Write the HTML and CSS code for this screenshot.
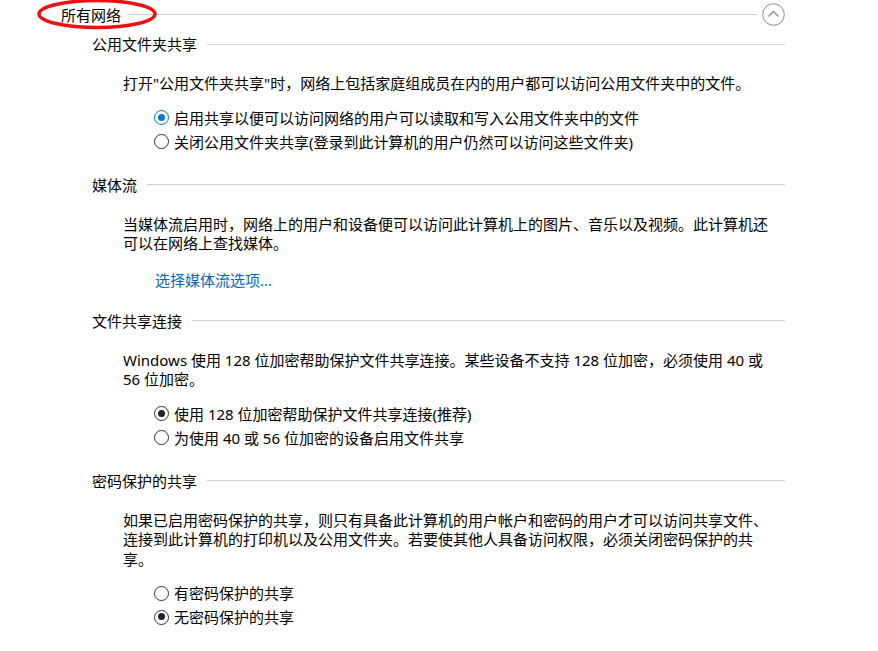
FILE: index.html
```html
<!DOCTYPE html>
<html lang="zh-CN">
<head>
<meta charset="utf-8">
<title>高级共享设置</title>
<link rel="stylesheet" href="styles.css">
</head>
<body>
<div class="page">
  <div class="group-head">
    <span class="group-title">所有网络</span>
    <span class="rule"></span>
    <button class="collapse" aria-label="折叠">
      <svg width="23" height="23" viewBox="0 0 23 23"><circle cx="11.5" cy="11.5" r="10.8" fill="none" stroke="#8a8a8a" stroke-width="1"/><path d="M6.5 13.5 L11.5 8.5 L16.5 13.5" fill="none" stroke="#8a8a8a" stroke-width="1.3"/></svg>
    </button>
    <svg class="annot" width="126" height="34" viewBox="0 0 126 34"><ellipse cx="60" cy="16" rx="58" ry="13.5" fill="none" stroke="#ee1111" stroke-width="3.5"/></svg>
  </div>

  <section class="sec first">
    <div class="sec-head"><span>公用文件夹共享</span><span class="rule"></span></div>
    <p class="desc">打开"公用文件夹共享"时，网络上包括家庭组成员在内的用户都可以访问公用文件夹中的文件。</p>
    <div class="radios">
      <label class="radio"><span class="dot on-blue"></span>启用共享以便可以访问网络的用户可以读取和写入公用文件夹中的文件</label>
      <label class="radio"><span class="dot"></span>关闭公用文件夹共享(登录到此计算机的用户仍然可以访问这些文件夹)</label>
    </div>
  </section>

  <section class="sec">
    <div class="sec-head"><span>媒体流</span><span class="rule"></span></div>
    <p class="desc">当媒体流启用时，网络上的用户和设备便可以访问此计算机上的图片、音乐以及视频。此计算机还可以在网络上查找媒体。</p>
    <a class="link" href="#">选择媒体流选项...</a>
  </section>

  <section class="sec">
    <div class="sec-head"><span>文件共享连接</span><span class="rule"></span></div>
    <p class="desc">Windows 使用 128 位加密帮助保护文件共享连接。某些设备不支持 128 位加密，必须使用 40 或 56 位加密。</p>
    <div class="radios">
      <label class="radio"><span class="dot on-dark"></span>使用 128 位加密帮助保护文件共享连接(推荐)</label>
      <label class="radio"><span class="dot"></span>为使用 40 或 56 位加密的设备启用文件共享</label>
    </div>
  </section>

  <section class="sec">
    <div class="sec-head"><span>密码保护的共享</span><span class="rule"></span></div>
    <p class="desc">如果已启用密码保护的共享，则只有具备此计算机的用户帐户和密码的用户才可以访问共享文件、连接到此计算机的打印机以及公用文件夹。若要使其他人具备访问权限，必须关闭密码保护的共享。</p>
    <div class="radios">
      <label class="radio"><span class="dot"></span>有密码保护的共享</label>
      <label class="radio"><span class="dot on-dark"></span>无密码保护的共享</label>
    </div>
  </section>
</div>
</body>
</html>
```

FILE: styles.css
```css
html, body {
  margin: 0;
  padding: 0;
  background: #ffffff;
}

body {
  font-family: "Noto Sans", "Noto Sans CJK SC", sans-serif;
  font-size: 15px;
  line-height: 20px;
  color: #000000;
}

.page {
  width: 724px;
  padding: 0 0 0 61px;
}

.group-head {
  position: relative;
  display: flex;
  align-items: center;
  height: 28px;
  padding-top: 1px;
  box-sizing: border-box;
}

.group-title {
  white-space: nowrap;
}

.rule {
  flex: 1;
  height: 0;
  border-top: 1px solid #cfcfcf;
}

.group-head .rule {
  margin-left: 6px;
  margin-right: 5px;
}

.collapse {
  width: 23px;
  height: 23px;
  padding: 0;
  border: 0;
  background: none;
  display: block;
}

.collapse svg {
  display: block;
}

.annot {
  position: absolute;
  left: -24px;
  top: -2px;
  pointer-events: none;
}

.sec {
  margin: 21px 0 0 31px;
}

.sec.first {
  margin-top: 6px;
}

.sec-head {
  display: flex;
  align-items: center;
  height: 20px;
  white-space: nowrap;
}

.sec-head .rule {
  margin-left: 10px;
}

.desc {
  margin: 20px 0 0 31px;
  width: 652px;
  line-height: 19.5px;
}

.radios {
  margin: 12px 0 0 62px;
}

.radio {
  display: flex;
  align-items: center;
  height: 24px;
  white-space: nowrap;
}

.dot {
  box-sizing: border-box;
  width: 15px;
  height: 15px;
  border: 1.5px solid #333333;
  border-radius: 50%;
  margin-right: 5px;
  flex: none;
  position: relative;
  background: #fff;
}

.dot.on-blue {
  border-color: #0078d7;
}

.dot.on-blue::after,
.dot.on-dark::after {
  content: "";
  position: absolute;
  left: 2.5px;
  top: 2.5px;
  width: 7px;
  height: 7px;
  border-radius: 50%;
}

.dot.on-blue::after {
  background: #0078d7;
}

.dot.on-dark {
  border-color: #333333;
}

.dot.on-dark::after {
  background: #222222;
}

.link {
  display: block;
  margin: 16px 0 0 63px;
  color: #0066cc;
  text-decoration: none;
  width: max-content;
}
```
